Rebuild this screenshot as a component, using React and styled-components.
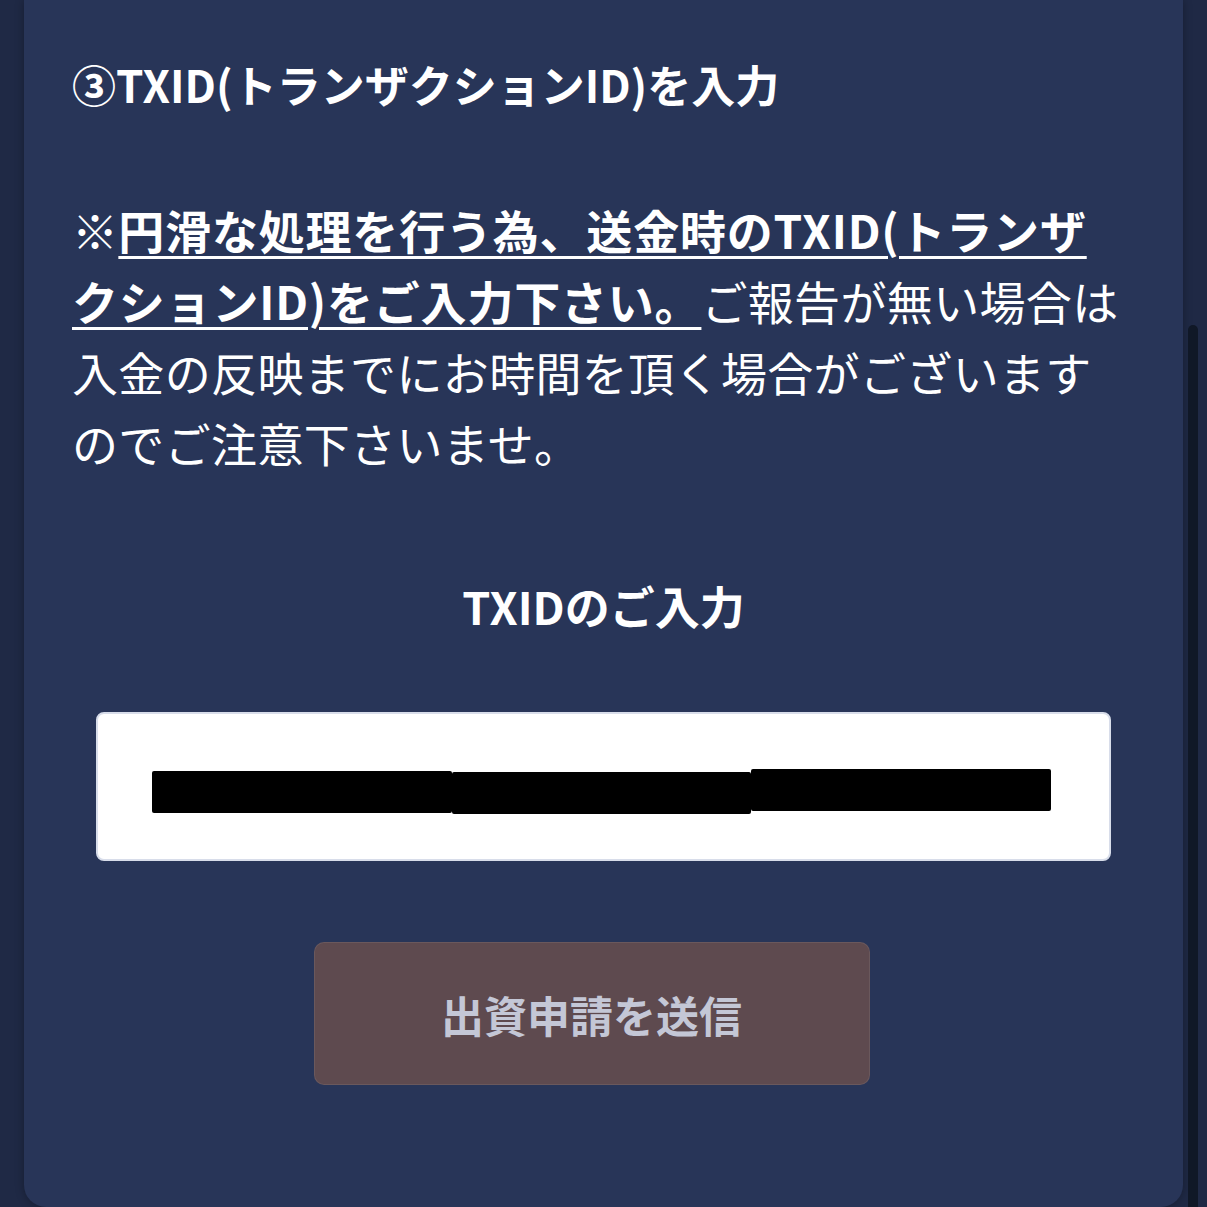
import styled, { createGlobalStyle } from "styled-components";

const GlobalStyle = createGlobalStyle`
  html, body {
    margin: 0;
    padding: 0;
    background: #1f2945;
  }
  body {
    font-family: "Noto Sans CJK JP", "Noto Sans", sans-serif;
    color: #ffffff;
  }
`;

const Page = styled.div`
  min-height: 1207px;
  padding: 0 24px;
  box-sizing: border-box;
  overflow: hidden;
`;

const Card = styled.section`
  width: 1159px;
  min-height: 1207px;
  box-sizing: border-box;
  background: #283558;
  border-radius: 0 0 22px 22px;
  box-shadow: 0 0 10px rgba(0, 0, 0, 0.3);
  padding: 54px 48px 120px;
  display: flex;
  flex-direction: column;
`;

const Title = styled.h2`
  margin: 0;
  font-size: 44px;
  line-height: 60px;
  font-weight: 700;
`;

const Notice = styled.p`
  margin: 80px 0 0;
  font-size: 46px;
  line-height: 71px;
  font-weight: 400;
  letter-spacing: 0.35px;
  white-space: nowrap;
`;

const Strong = styled.span`
  font-weight: 700;
`;

const Underlined = styled.span`
  font-weight: 700;
  letter-spacing: 0.8px;
  text-decoration: underline;
  text-decoration-thickness: 3px;
  text-underline-offset: 7px;
`;

const FieldLabel = styled.h3`
  margin: 98px 0 0;
  font-size: 45px;
  line-height: 60px;
  font-weight: 700;
  text-align: center;
`;

const Field = styled.div`
  margin: 76px 24px 0;
  height: 149px;
  box-sizing: border-box;
  background: #ffffff;
  border: 2px solid #d8ddea;
  border-radius: 8px;
  padding: 8px 58px 0 54px;
  display: flex;
  align-items: center;
`;

const Redaction = styled.div`
  flex: 1;
  display: flex;
  align-items: center;
`;

const Stroke = styled.span`
  flex: 1;
  height: 42px;
  background: #000000;
  transform: translateY(${(p) => p.$shift}px);
  border-radius: 2px;
`;

const Actions = styled.div`
  margin-top: 81px;
  display: flex;
  justify-content: center;
  padding-right: 24px;
`;

const SubmitButton = styled.button`
  width: 556px;
  height: 143px;
  background: #5e4a4f;
  border: 1px solid rgba(255, 255, 255, 0.08);
  border-radius: 10px;
  color: #c4c7d6;
  font-family: "Noto Sans CJK JP", "Noto Sans", sans-serif;
  font-size: 43px;
  font-weight: 700;
  cursor: not-allowed;
`;

const Scrollbar = styled.div`
  position: fixed;
  top: 325px;
  right: 9px;
  bottom: 0;
  width: 10px;
  background: #101827;
  border-radius: 5px 5px 0 0;
`;

export default function App() {
  return (
    <>
      <GlobalStyle />
      <Page>
        <Card>
          <Title>③TXID(トランザクションID)を入力</Title>
          <Notice>
            <Strong>※</Strong>
            <Underlined>
              円滑な処理を行う為、送金時のTXID(トランザ
              <br />
              クションID)をご入力下さい。
            </Underlined>
            ご報告が無い場合は
            <br />
            入金の反映までにお時間を頂く場合がございます
            <br />
            のでご注意下さいませ。
          </Notice>
          <FieldLabel>TXIDのご入力</FieldLabel>
          <Field>
            <Redaction>
              <Stroke $shift={1} />
              <Stroke $shift={2} />
              <Stroke $shift={-1} />
            </Redaction>
          </Field>
          <Actions>
            <SubmitButton type="button" disabled>
              出資申請を送信
            </SubmitButton>
          </Actions>
        </Card>
      </Page>
      <Scrollbar />
    </>
  );
}
